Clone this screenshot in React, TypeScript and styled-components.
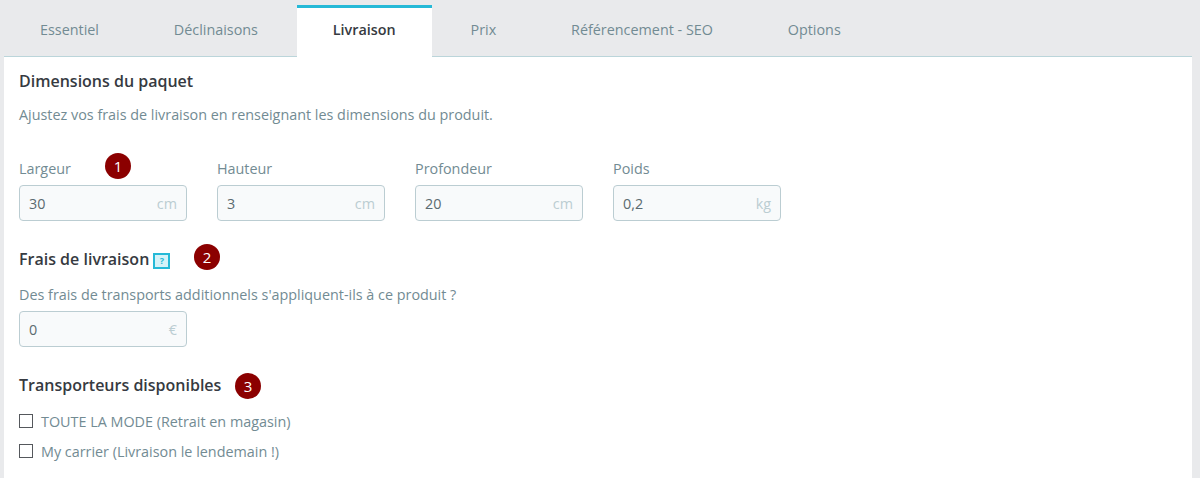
import React from "react";
import styled, { createGlobalStyle } from "styled-components";

const Global = createGlobalStyle`
  html, body { margin: 0; padding: 0; background: #e9eaec; }
  body { font-family: "Open Sans", "Liberation Sans", sans-serif; font-size: 14.37px; color: #728b93; }
`;

const Page = styled.div`
  width: 1200px;
  height: 478px;
  overflow: hidden;
  padding: 5px 8px 0 4px;
  box-sizing: border-box;
  position: relative;
`;

const Tabs = styled.div`
  display: flex;
  gap: 2.85px;
  height: 51px;
`;

const Tab = styled.div<{ $active?: boolean }>`
  padding: ${(p) => (p.$active ? "0 36px" : "3px 36px 0")};
  border-top: ${(p) => (p.$active ? "3px solid #25b9d7" : "none")};
  background: ${(p) => (p.$active ? "#fff" : "transparent")};
  color: ${(p) => (p.$active ? "#363a41" : "#728b93")};
  font-weight: ${(p) => (p.$active ? 600 : 400)};
  line-height: 44px;
  position: relative;
  z-index: 1;
  height: 52px;
  box-sizing: border-box;
`;

const Panel = styled.div`
  background: #fff;
  border-top: 1px solid #bbd5da;
  padding: 13px 15px 0;
  height: 430px;
  box-sizing: border-box;
`;

const Heading = styled.h2`
  margin: 0;
  font-size: 16px;
  line-height: 22px;
  font-weight: 600;
  color: #363a41;
  display: flex;
  align-items: center;
`;

const Help = styled.p`
  margin: 0;
  line-height: 20px;
`;

const FieldRow = styled.div`
  display: flex;
  gap: 30px;
`;

const Field = styled.div`
  width: 168px;
`;

const Label = styled.div`
  line-height: 20px;
  margin-bottom: 6px;
`;

const InputBox = styled.div`
  height: 36px;
  box-sizing: border-box;
  border: 1px solid #bbcdd2;
  border-radius: 4px;
  background: #f8fafb;
  display: flex;
  align-items: center;
  justify-content: space-between;
  padding: 0 9px;
  color: #5b6b70;
`;

const Unit = styled.span`
  color: #bbcdd2;
`;

const HintIcon = styled.span`
  display: inline-flex;
  align-items: center;
  justify-content: center;
  width: 17px;
  height: 16px;
  box-sizing: border-box;
  margin: 3px 0 0 4px;
  border: 2px solid #25b9d7;
  background: #d5f2f8;
  color: #25b9d7;
  font-size: 9px;
  font-weight: 700;
`;

const CheckRow = styled.label`
  display: flex;
  align-items: center;
  gap: 8px;
  line-height: 20px;
`;

const Box = styled.span`
  width: 14px;
  height: 14px;
  box-sizing: border-box;
  border: 1px solid #55585c;
  background: #fff;
  margin-top: -2px;
`;

const Section = styled.div<{ $top: number }>`
  margin-top: ${(p) => p.$top}px;
`;

const Badge = styled.span<{ $x: number; $y: number }>`
  position: absolute;
  left: ${(p) => p.$x}px;
  top: ${(p) => p.$y}px;
  width: 26px;
  height: 26px;
  border-radius: 50%;
  background: #8b0000;
  color: #fff;
  font-size: 15px;
  display: flex;
  align-items: center;
  justify-content: center;
`;

const fields = [
  { label: "Largeur", value: "30", unit: "cm" },
  { label: "Hauteur", value: "3", unit: "cm" },
  { label: "Profondeur", value: "20", unit: "cm" },
  { label: "Poids", value: "0,2", unit: "kg" },
];

export default function App() {
  return (
    <Page>
      <Global />
      <Tabs>
        <Tab>Essentiel</Tab>
        <Tab>Déclinaisons</Tab>
        <Tab $active>Livraison</Tab>
        <Tab>Prix</Tab>
        <Tab>Référencement - SEO</Tab>
        <Tab>Options</Tab>
      </Tabs>
      <Panel>
        <Heading>Dimensions du paquet</Heading>
        <Section $top={13}>
          <Help>Ajustez vos frais de livraison en renseignant les dimensions du produit.</Help>
        </Section>
        <Section $top={34}>
          <FieldRow>
            {fields.map((f) => (
              <Field key={f.label}>
                <Label>{f.label}</Label>
                <InputBox>
                  <span>{f.value}</span>
                  <Unit>{f.unit}</Unit>
                </InputBox>
              </Field>
            ))}
          </FieldRow>
        </Section>
        <Section $top={27}>
          <Heading>
            Frais de livraison
            <HintIcon>?</HintIcon>
          </Heading>
        </Section>
        <Section $top={15}>
          <Help>Des frais de transports additionnels s'appliquent-ils à ce produit ?</Help>
        </Section>
        <Section $top={6}>
          <Field>
            <InputBox>
              <span>0</span>
              <Unit>€</Unit>
            </InputBox>
          </Field>
        </Section>
        <Section $top={27}>
          <Heading>Transporteurs disponibles</Heading>
        </Section>
        <Section $top={16}>
          <CheckRow>
            <Box />
            TOUTE LA MODE (Retrait en magasin)
          </CheckRow>
        </Section>
        <Section $top={10}>
          <CheckRow>
            <Box />
            My carrier (Livraison le lendemain !)
          </CheckRow>
        </Section>
      </Panel>
      <Badge $x={105} $y={153}>1</Badge>
      <Badge $x={194} $y={244}>2</Badge>
      <Badge $x={235} $y={373}>3</Badge>
    </Page>
  );
}
